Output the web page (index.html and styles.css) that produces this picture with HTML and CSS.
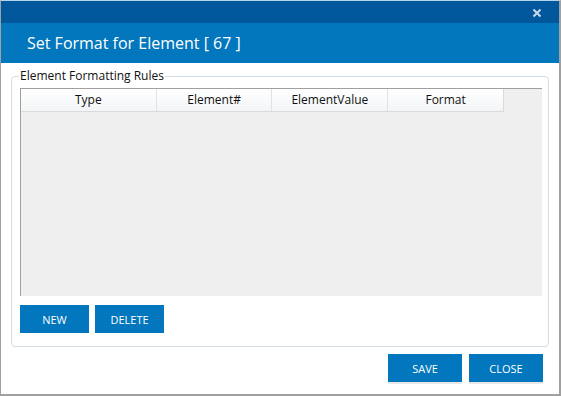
FILE: index.html
```html
<!DOCTYPE html>
<html lang="en">
  <head>
    <meta charset="UTF-8" />
    <title>Set Format for Element</title>
    <link rel="stylesheet" href="styles.css">
  </head>
  <body>
    <div class="dialog">
      <div class="dialog-topbar">
        <span class="close-icon">
          <svg width="10" height="10" viewBox="0 0 10 10">
            <path d="M1.5 1.5 L8.5 8.5 M8.5 1.5 L1.5 8.5" stroke="#c6dbec" stroke-width="2" />
          </svg>
        </span>
      </div>
      <div class="dialog-title">Set Format for Element [ 67 ]</div>

      <fieldset class="rules">
        <legend>Element Formatting Rules</legend>
        <div class="grid">
          <div class="grid-header">
            <div class="col col-type">Type</div>
            <div class="col">Element#</div>
            <div class="col">ElementValue</div>
            <div class="col">Format</div>
          </div>
        </div>
        <div class="rules-actions">
          <button class="btn">NEW</button>
          <button class="btn">DELETE</button>
        </div>
      </fieldset>

      <div class="dialog-footer">
        <button class="btn btn-wide">SAVE</button>
        <button class="btn btn-wide">CLOSE</button>
      </div>
    </div>
  </body>
</html>
```

FILE: styles.css
```css
* {
  margin: 0;
  padding: 0;
  box-sizing: border-box;
}

body {
  font-family: "Open Sans", "Noto Sans", sans-serif;
  background: white;
}

.dialog {
  width: 561px;
  height: 396px;
  border-top: 1px solid #b5d3e8;
  border-left: 1px solid #a0a0a0;
  border-right: 2px solid #a0a0a0;
  border-bottom: 2px solid #a0a0a0;
  background: white;
}

.dialog-topbar {
  height: 22px;
  background: #01579b;
  display: flex;
  justify-content: flex-end;
  align-items: center;
  padding-right: 17px;
}

.close-icon {
  display: flex;
  margin-top: 1px;
}

.dialog-title {
  height: 40px;
  background: #0277bd;
  color: white;
  font-size: 16px;
  line-height: 40px;
  padding-left: 26px;
}

.rules {
  margin: 5px 10px 0 10px;
  border: 1px solid #d3dde6;
  border-radius: 4px;
  padding: 4px 6px 13px 8px;
}

.rules legend {
  font-size: 12px;
  line-height: 16px;
  color: #111;
  margin-left: -1px;
  padding: 0 1px;
}

.grid {
  height: 208px;
  background: #efefef;
  border-top: 1px solid #a0a0a0;
  border-left: 1px solid #a0a0a0;
}

.grid-header {
  display: flex;
  width: 483px;
  height: 23px;
  background: linear-gradient(#ffffff, #f3f4f6);
  border-bottom: 1px solid #dadada;
  border-right: 1px solid #dadada;
}

.col {
  width: 116px;
  border-left: 1px solid #e2e2e2;
  font-size: 12px;
  line-height: 22px;
  text-align: center;
  color: #111;
}

.col-type {
  width: 135px;
  border-left: none;
}

.rules-actions {
  display: flex;
  gap: 6px;
  margin-top: 9px;
}

.btn {
  width: 69px;
  height: 28px;
  background: #0277bd;
  color: white;
  border: none;
  font-family: "Open Sans", "Noto Sans", sans-serif;
  font-size: 11px;
}

.dialog-footer {
  display: flex;
  justify-content: flex-end;
  gap: 7px;
  margin-top: 7px;
  padding-right: 16px;
}

.btn-wide {
  width: 74px;
  box-shadow: 0 2px 0 #e8e8e8;
}
```
